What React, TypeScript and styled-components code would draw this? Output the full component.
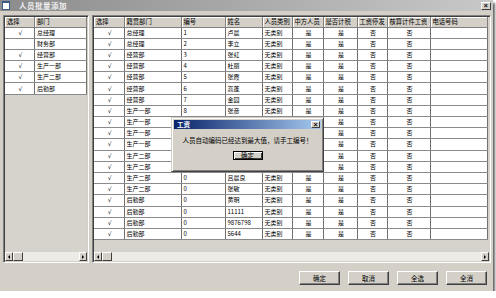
import styled, { createGlobalStyle } from "styled-components";

const GlobalStyle = createGlobalStyle`
  html, body {
    margin: 0;
    padding: 0;
    background: #ffffff;
  }
  body {
    font-family: "Noto Sans CJK SC", "Liberation Sans", sans-serif;
  }
`;

const Window = styled.div`
  position: relative;
  width: 493px;
  height: 291px;
  background: #d4d0c8;
  box-shadow: 2px 3px 2px rgba(0, 0, 0, 0.6);
  display: flex;
  flex-direction: column;
  color: #000;
  overflow: hidden;
`;

const TitleBar = styled.div`
  height: 11px;
  display: flex;
  align-items: center;
  padding: 0 2px;
  background: linear-gradient(to right, #8c8c8c, #c8c8c8);
  color: #eeeeee;
  font-size: 7.5px;
  font-weight: bold;
  letter-spacing: 0.5px;
`;

const TitleIcon = styled.div`
  width: 6px;
  height: 6px;
  background: #ffffff;
  border: 1px solid #3a5a8a;
  border-top-width: 2px;
  margin-right: 9px;
`;

const TitleText = styled.span`
  flex: 1;
  line-height: 11px;
`;

const CloseBox = styled.div<{ $size?: number }>`
  width: ${(p) => p.$size ?? 10}px;
  height: ${(p) => (p.$size ?? 10) - 2}px;
  background: #d4d0c8;
  box-sizing: border-box;
  border: 1px solid;
  border-color: #ffffff #404040 #404040 #ffffff;
  display: flex;
  align-items: center;
  justify-content: center;
  color: #000;
  font-family: "Liberation Sans", sans-serif;
  font-size: 7px;
  font-weight: bold;
  line-height: 1;
`;

const Body = styled.div`
  flex: 1;
  display: flex;
  flex-direction: column;
  padding: 4px 2px 0 3px;
`;

const GridsRow = styled.div`
  display: flex;
  gap: 3px;
  height: 248px;
`;

const Panel = styled.div<{ $width: number }>`
  width: ${(p) => p.$width}px;
  box-sizing: border-box;
  border: 1px solid;
  border-color: #808080 #ffffff #ffffff #808080;
  box-shadow: inset 1px 1px 0 #404040, inset -1px -1px 0 #d4d0c8;
  background: #d6d3cd;
  padding: 1px;
  display: flex;
  flex-direction: column;
`;

const GridArea = styled.div`
  flex: 1;
  overflow: hidden;
`;

const Table = styled.table`
  border-collapse: collapse;
  table-layout: fixed;
  font-size: 6px;
`;

const HeadCell = styled.th<{ $w: number }>`
  width: ${(p) => p.$w}px;
  height: 10px;
  padding: 0 0 0 2px;
  box-sizing: border-box;
  background: #d4d0c8;
  border-right: 1px solid #808080;
  border-bottom: 1px solid #808080;
  box-shadow: inset 1px 1px 0 #ffffff;
  font-weight: normal;
  font-size: 6.3px;
  text-align: left;
  white-space: nowrap;
  overflow: hidden;
  line-height: 9px;
`;

const Cell = styled.td<{ $center?: boolean }>`
  height: 11.2px;
  padding: 0 0 0 2px;
  box-sizing: border-box;
  background: #ffffff;
  border-right: 1px solid #707070;
  border-bottom: 1px solid #8a8a8a;
  text-align: ${(p) => (p.$center ? "center" : "left")};
  white-space: nowrap;
  overflow: hidden;
  line-height: 10px;
`;

const Check = styled.span`
  font-family: "DejaVu Sans", sans-serif;
  font-size: 6px;
`;

const HScroll = styled.div`
  height: 9px;
  display: flex;
  background: #ecebe6;
`;

const ArrowBtn = styled.div`
  width: 8px;
  height: 9px;
  box-sizing: border-box;
  background: #d4d0c8;
  border: 1px solid;
  border-color: #ffffff #404040 #404040 #ffffff;
  display: flex;
  align-items: center;
  justify-content: center;
`;

const Arrow = styled.div<{ $dir: "left" | "right" }>`
  width: 0;
  height: 0;
  border-top: 2px solid transparent;
  border-bottom: 2px solid transparent;
  ${(p) =>
    p.$dir === "left"
      ? "border-right: 2px solid #000;"
      : "border-left: 2px solid #000;"}
`;

const Thumb = styled.div`
  width: 10px;
  height: 9px;
  box-sizing: border-box;
  background: #d4d0c8;
  border: 1px solid;
  border-color: #ffffff #404040 #404040 #ffffff;
`;

const Track = styled.div`
  flex: 1;
`;

const ButtonRow = styled.div`
  display: flex;
  justify-content: flex-end;
  gap: 8px;
  margin-top: 8px;
  padding-right: 4px;
`;

const Button = styled.div<{ $w?: number; $h?: number; $default?: boolean }>`
  width: ${(p) => p.$w ?? 41}px;
  height: ${(p) => p.$h ?? 14}px;
  box-sizing: border-box;
  background: #d4d0c8;
  border: 1px solid;
  border-color: ${(p) =>
    p.$default ? "#000" : "#ffffff #404040 #404040 #ffffff"};
  box-shadow: ${(p) =>
    p.$default
      ? "inset 1px 1px 0 #ffffff, inset -1px -1px 0 #404040"
      : "inset -1px -1px 0 #808080"};
  display: flex;
  align-items: center;
  justify-content: center;
  font-size: 6.5px;
  line-height: 1;
`;

const Dialog = styled.div`
  position: absolute;
  left: 171px;
  top: 117px;
  width: 153px;
  height: 55px;
  box-sizing: border-box;
  background: #d4d0c8;
  border: 1px solid;
  border-color: #d4d0c8 #404040 #404040 #d4d0c8;
  box-shadow: inset 1px 1px 0 #ffffff, inset -1px -1px 0 #808080;
  padding: 2px;
  display: flex;
  flex-direction: column;
`;

const DialogTitle = styled.div`
  height: 9px;
  display: flex;
  align-items: center;
  padding: 0 1px 0 3px;
  background: linear-gradient(to right, #0a246a, #a6caf0);
  color: #ffffff;
  font-size: 6.5px;
  font-weight: bold;
`;

const DialogMessage = styled.div`
  font-size: 6.5px;
  text-align: center;
  margin-top: 7px;
  line-height: 8px;
  white-space: nowrap;
`;

const DialogActions = styled.div`
  display: flex;
  justify-content: center;
  margin-top: 7px;
`;

const leftRows: [boolean, string][] = [
  [true, "总经理"],
  [false, "财务部"],
  [true, "经营部"],
  [true, "生产一部"],
  [true, "生产二部"],
  [true, "后勤部"],
];

const rightCols: [string, number][] = [
  ["选择", 30],
  ["籍贯部门", 57],
  ["编号", 44],
  ["姓名", 37],
  ["人员类别", 30],
  ["中方人员", 31],
  ["是否计税", 34],
  ["工资停发", 30],
  ["核算计件工资", 43],
  ["电话号码", 57],
];

// rows 9-13 sit under the message box, so their middle columns stay blank
const people: [string, string, string, boolean][] = [
  ["总经理", "1", "卢晨", true],
  ["总经理", "2", "李立", true],
  ["经营部", "3", "张虹", true],
  ["经营部", "4", "杜丽", true],
  ["经营部", "5", "张霞", true],
  ["经营部", "6", "高蓬", true],
  ["经营部", "7", "金园", true],
  ["生产一部", "8", "张彦", true],
  ["生产一部", "", "", false],
  ["生产一部", "", "", false],
  ["生产一部", "", "", false],
  ["生产二部", "", "", false],
  ["生产二部", "", "", false],
  ["生产二部", "0", "吕晨良", true],
  ["生产二部", "0", "张敏", true],
  ["后勤部", "0", "黄明", true],
  ["后勤部", "0", "11111", true],
  ["后勤部", "0", "9876798", true],
  ["后勤部", "0", "5644", true],
];

const ScrollBar = () => (
  <HScroll>
    <ArrowBtn>
      <Arrow $dir="left" />
    </ArrowBtn>
    <Thumb />
    <Track />
    <ArrowBtn>
      <Arrow $dir="right" />
    </ArrowBtn>
  </HScroll>
);

export default function App() {
  return (
    <>
      <GlobalStyle />
      <Window>
        <TitleBar>
          <TitleIcon />
          <TitleText>人员批量添加</TitleText>
          <CloseBox>×</CloseBox>
        </TitleBar>
        <Body>
          <GridsRow>
            <Panel $width={86}>
              <GridArea>
                <Table>
                  <thead>
                    <tr>
                      <HeadCell $w={30}>选择</HeadCell>
                      <HeadCell $w={53}>部门</HeadCell>
                    </tr>
                  </thead>
                  <tbody>
                    {leftRows.map(([checked, dept]) => (
                      <tr key={dept}>
                        <Cell $center>{checked && <Check>√</Check>}</Cell>
                        <Cell>{dept}</Cell>
                      </tr>
                    ))}
                  </tbody>
                </Table>
              </GridArea>
              <ScrollBar />
            </Panel>
            <Panel $width={399}>
              <GridArea>
                <Table>
                  <thead>
                    <tr>
                      {rightCols.map(([name, w]) => (
                        <HeadCell key={name} $w={w}>
                          {name}
                        </HeadCell>
                      ))}
                    </tr>
                  </thead>
                  <tbody>
                    {people.map(([dept, id, name, shown], i) => (
                      <tr key={i}>
                        <Cell $center>
                          <Check>√</Check>
                        </Cell>
                        <Cell>{dept}</Cell>
                        <Cell>{id}</Cell>
                        <Cell>{name}</Cell>
                        <Cell>{shown && "无类别"}</Cell>
                        <Cell $center>{shown && "是"}</Cell>
                        <Cell $center>是</Cell>
                        <Cell $center>否</Cell>
                        <Cell $center>否</Cell>
                        <Cell />
                      </tr>
                    ))}
                  </tbody>
                </Table>
              </GridArea>
              <ScrollBar />
            </Panel>
          </GridsRow>
          <ButtonRow>
            <Button>确定</Button>
            <Button>取消</Button>
            <Button>全选</Button>
            <Button>全消</Button>
          </ButtonRow>
        </Body>
        <Dialog>
          <DialogTitle>
            <TitleText>工资</TitleText>
            <CloseBox $size={9}>×</CloseBox>
          </DialogTitle>
          <DialogMessage>人员自动编码已经达到最大值，请手工编号！</DialogMessage>
          <DialogActions>
            <Button $w={30} $h={9} $default>
              确定
            </Button>
          </DialogActions>
        </Dialog>
      </Window>
    </>
  );
}
